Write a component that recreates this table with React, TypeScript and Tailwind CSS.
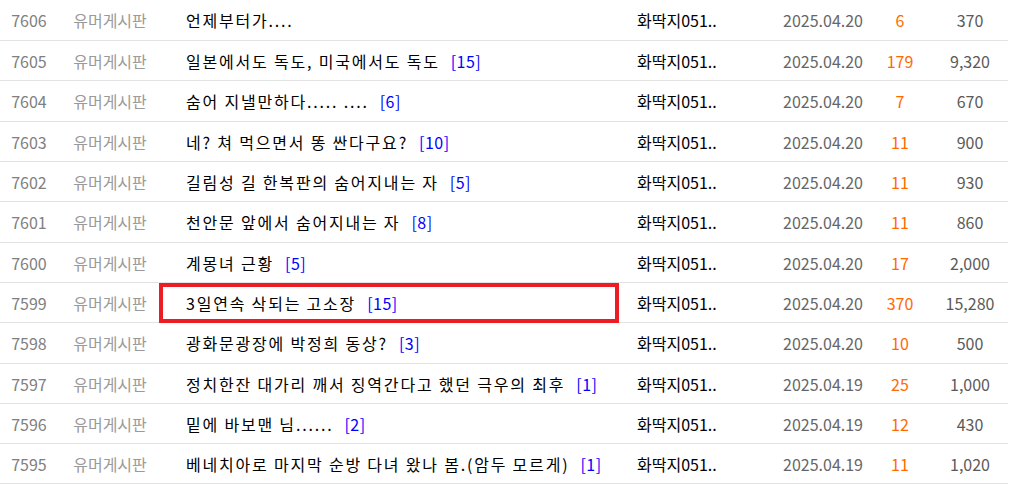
import React from "react";

type Row = {
  no: string;
  title: string;
  cmt?: string;
  date: string;
  reply: string;
  views: string;
  h: string;
};

const rows: Row[] = [
  { no: "7606", title: "언제부터가....", date: "2025.04.20", reply: "6", views: "370", h: "h-[41px]" },
  { no: "7605", title: "일본에서도 독도, 미국에서도 독도", cmt: "[15]", date: "2025.04.20", reply: "179", views: "9,320", h: "h-[40px]" },
  { no: "7604", title: "숨어 지낼만하다..... ....", cmt: "[6]", date: "2025.04.20", reply: "7", views: "670", h: "h-[41px]" },
  { no: "7603", title: "네? 쳐 먹으면서 똥 싼다구요?", cmt: "[10]", date: "2025.04.20", reply: "11", views: "900", h: "h-[40px]" },
  { no: "7602", title: "길림성 길 한복판의 숨어지내는 자", cmt: "[5]", date: "2025.04.20", reply: "11", views: "930", h: "h-[40px]" },
  { no: "7601", title: "천안문 앞에서 숨어지내는 자", cmt: "[8]", date: "2025.04.20", reply: "11", views: "860", h: "h-[41px]" },
  { no: "7600", title: "계몽녀 근황", cmt: "[5]", date: "2025.04.20", reply: "17", views: "2,000", h: "h-[40px]" },
  { no: "7599", title: "3일연속 삭되는 고소장", cmt: "[15]", date: "2025.04.20", reply: "370", views: "15,280", h: "h-[40px]" },
  { no: "7598", title: "광화문광장에 박정희 동상?", cmt: "[3]", date: "2025.04.20", reply: "10", views: "500", h: "h-[41px]" },
  { no: "7597", title: "정치한잔 대가리 깨서 징역간다고 했던 극우의 최후", cmt: "[1]", date: "2025.04.19", reply: "25", views: "1,000", h: "h-[40px]" },
  { no: "7596", title: "밑에 바보맨 님......", cmt: "[2]", date: "2025.04.19", reply: "12", views: "430", h: "h-[40px]" },
  { no: "7595", title: "베네치아로 마지막 순방 다녀 왔나 봄.(암두 모르게)", cmt: "[1]", date: "2025.04.19", reply: "11", views: "1,020", h: "h-[40px]" },
];

export default function App() {
  return (
    <div className="relative w-[1020px] h-[487px] bg-white overflow-hidden font-['Noto_Sans_CJK_KR',sans-serif] text-[16px]">
      <div className="w-[1008px] flex flex-col">
        {rows.map((r) => (
          <div
            key={r.no}
            className={`${r.h} flex items-center border-b border-[#e3e3e3] box-border whitespace-nowrap`}
          >
            <div className="w-[58px] text-center text-[#808080]">{r.no}</div>
            <div className="w-[104px] text-center text-[#9a9a9a]">유머게시판</div>
            <div className="w-[458px] pl-[24px] text-black flex items-center">
              <span className="tracking-[1.8px]">{r.title}</span>
              {r.cmt && <span className="ml-[11px] text-[#0000ff] tracking-[0.5px]">{r.cmt}</span>}
            </div>
            <div className="w-[143px] pl-[17px] text-black">화딱지051..</div>
            <div className="w-[120px] text-center text-[#666666]">{r.date}</div>
            <div className="w-[34px] text-center text-[#ff6a00]">{r.reply}</div>
            <div className="w-[15px]" />
            <div className="w-[76px] text-center text-[#5a5a5a]">{r.views}</div>
          </div>
        ))}
      </div>
      <div className="absolute left-[159px] top-[283px] w-[460px] h-[40px] border-[4px] border-[#ed1c24] box-border" />
    </div>
  );
}
